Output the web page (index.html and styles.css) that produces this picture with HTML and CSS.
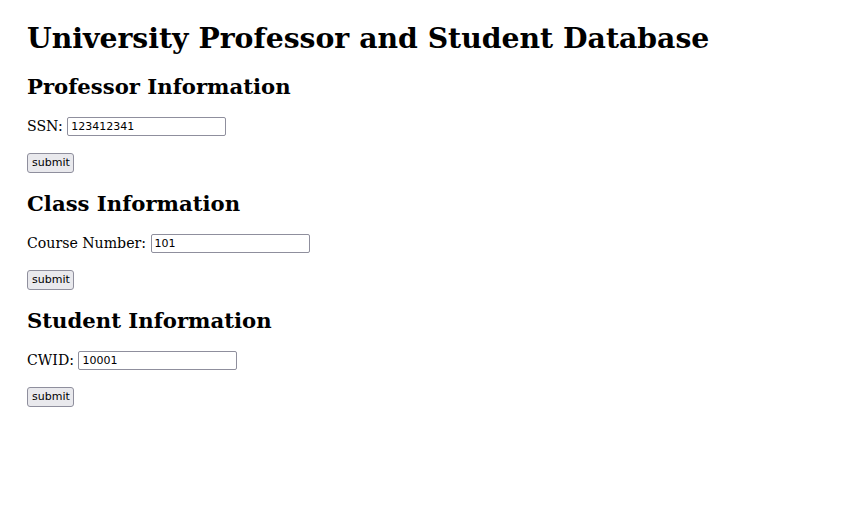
FILE: index.html
```html
<!DOCTYPE html>
<html>
<head>
<meta charset="utf-8">
<title>University Database</title>
<link rel="stylesheet" href="styles.css">
</head>
<body class="page">
<h1 class="title">University Professor and Student Database</h1>
<h2 class="section">Professor Information</h2>
<form class="form">
<p class="row row-input">SSN: <input class="field" type="text" value="123412341"></p>
<p class="row"><button class="btn" type="button">submit</button></p>
</form>
<h2 class="section">Class Information</h2>
<form class="form">
<p class="row row-input">Course Number: <input class="field" type="text" value="101"></p>
<p class="row"><button class="btn" type="button">submit</button></p>
</form>
<h2 class="section">Student Information</h2>
<form class="form">
<p class="row row-input">CWID: <input class="field" type="text" value="10001"></p>
<p class="row"><button class="btn" type="button">submit</button></p>
</form>
</body>
</html>
```
FILE: styles.css
```css
.page {
  margin: 0 27px;
  font-family: "DejaVu Serif", serif;
  font-size: 14.14px;
  color: #000;
  background: #fff;
}
.title { font-size: 28.3px; margin: 21px 0 19px; }
.section { font-size: 21.2px; margin: 18.5px 0 17.6px; }
.form { margin: 0; }
.row { margin: 14px 0; }
.row-input { margin-bottom: 17px; }
.field {
  font-family: "DejaVu Sans", sans-serif;
  font-size: 11px;
  width: 159px;
  height: 19px;
  box-sizing: border-box;
  padding: 1px 3px;
  border: 1px solid #8f8f9d;
  border-radius: 2px;
  background: #fff;
  color: #000;
  vertical-align: middle;
}
.btn {
  font-family: "DejaVu Sans", sans-serif;
  font-size: 11px;
  height: 20px;
  width: 47px;
  box-sizing: border-box;
  padding: 0 4px;
  border: 1px solid #8f8f9d;
  border-radius: 3px;
  background: #e9e9ed;
  color: #000;
  vertical-align: middle;
}
```
